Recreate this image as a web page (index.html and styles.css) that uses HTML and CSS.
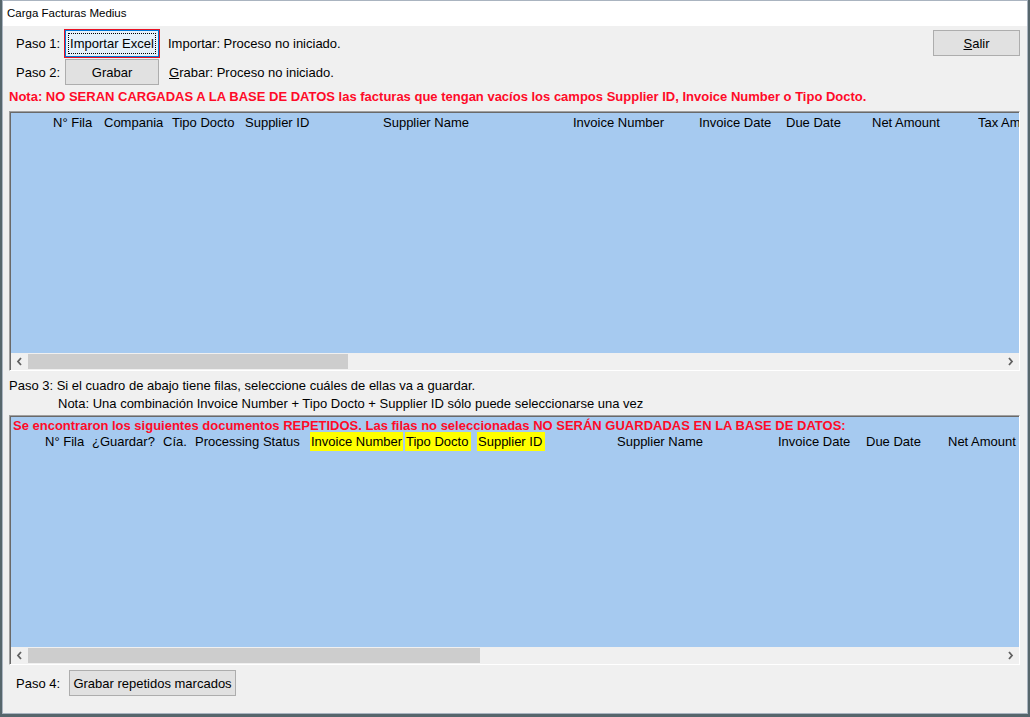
FILE: index.html
```html
<!DOCTYPE html>
<html lang="es">
<head>
<meta charset="utf-8">
<title>Carga Facturas Medius</title>
<link rel="stylesheet" href="styles.css">
</head>
<body>
<div class="window">
  <div class="titlebar">Carga Facturas Medius</div>
  <div class="client">
    <div class="row row1">
      <span class="label l1">Paso 1:</span>
      <span class="focus-wrap"><button class="btn btn-focus"><span class="focus-rect">Importar Excel</span></button></span>
      <span class="status">Importar: Proceso no iniciado.</span>
      <button class="btn btn-salir"><u>S</u>alir</button>
    </div>
    <div class="row row2">
      <span class="label l2">Paso 2:</span>
      <button class="btn btn-grabar">Grabar</button>
      <span class="status s2"><u>G</u>rabar: Proceso no iniciado.</span>
    </div>
    <div class="note">Nota: NO SERAN CARGADAS A LA BASE DE DATOS las facturas que tengan vacíos los campos Supplier ID, Invoice Number o Tipo Docto.</div>

    <div class="grid grid1">
      <div class="grid-body">
        <div class="hdr hdr1">
          <span class="c c-sp1"></span>
          <span class="c w51">N° Fila</span>
          <span class="c w68">Compania</span>
          <span class="c w73">Tipo Docto</span>
          <span class="c w138">Supplier ID</span>
          <span class="c w190">Supplier Name</span>
          <span class="c w126">Invoice Number</span>
          <span class="c w87">Invoice Date</span>
          <span class="c w86">Due Date</span>
          <span class="c w106">Net Amount</span>
          <span class="c wrest">Tax Amount</span>
        </div>
      </div>
      <div class="hscroll">
        <span class="arrow"><svg width="7" height="9" viewBox="0 0 7 9"><polyline points="5,1 2,4.5 5,8" fill="none" stroke="#606060" stroke-width="1.8"/></svg></span>
        <div class="track"><div class="thumb thumb1"></div></div>
        <span class="arrow"><svg width="7" height="9" viewBox="0 0 7 9"><polyline points="2,1 5,4.5 2,8" fill="none" stroke="#606060" stroke-width="1.8"/></svg></span>
      </div>
    </div>

    <div class="paso3 p3a">Paso 3: Si el cuadro de abajo tiene filas, seleccione cuáles de ellas va a guardar.</div>
    <div class="paso3 nota3">Nota: Una combinación Invoice Number + Tipo Docto + Supplier ID sólo puede seleccionarse una vez</div>

    <div class="grid grid2">
      <div class="grid-body">
        <div class="caption">Se encontraron los siguientes documentos REPETIDOS. Las filas no seleccionadas NO SERÁN GUARDADAS EN LA BASE DE DATOS:</div>
        <div class="hdr hdr2">
          <span class="c c-sp2"></span>
          <span class="c v47">N° Fila</span>
          <span class="c v71">¿Guardar?</span>
          <span class="c v32">Cía.</span>
          <span class="c v115">Processing Status</span>
          <span class="c v95"><span class="hl">Invoice Number</span></span>
          <span class="c v72"><span class="hl hl-wide">Tipo Docto</span></span>
          <span class="c v140"><span class="hl hl-wide">Supplier ID</span></span>
          <span class="c v161">Supplier Name</span>
          <span class="c v88">Invoice Date</span>
          <span class="c v82">Due Date</span>
          <span class="c wrest">Net Amount</span>
        </div>
      </div>
      <div class="hscroll">
        <span class="arrow"><svg width="7" height="9" viewBox="0 0 7 9"><polyline points="5,1 2,4.5 5,8" fill="none" stroke="#606060" stroke-width="1.8"/></svg></span>
        <div class="track"><div class="thumb thumb2"></div></div>
        <span class="arrow"><svg width="7" height="9" viewBox="0 0 7 9"><polyline points="2,1 5,4.5 2,8" fill="none" stroke="#606060" stroke-width="1.8"/></svg></span>
      </div>
    </div>

    <div class="row row4">
      <span class="label l4">Paso 4:</span>
      <button class="btn btn-rep">Grabar repetidos marcados</button>
    </div>
  </div>
</div>
</body>
</html>
```

FILE: styles.css
```css
html, body {
  margin: 0;
  padding: 0;
}
body {
  width: 1030px;
  height: 717px;
  overflow: hidden;
  background: #56666c;
  font-family: "Liberation Sans", Arial, sans-serif;
  font-size: 13px;
  color: #000;
}
.window {
  box-sizing: border-box;
  margin-left: 2px;
  width: 1026px;
  height: 714px;
  border: 1px solid #aab4c0;
  background: #f0f0f0;
  display: flex;
  flex-direction: column;
}
.titlebar {
  height: 25px;
  background: #fff;
  padding-left: 4px;
  line-height: 25px;
  font-size: 11.5px;
  flex: none;
}
.client {
  flex: 1;
  padding: 0 5px 0 6px;
  display: flex;
  flex-direction: column;
}
.row {
  display: flex;
  align-items: center;
}
.row1 {
  margin-top: 3px;
  height: 29px;
}
.row2 {
  margin-top: 1px;
  height: 26px;
}
.label {
  flex: none;
  margin-left: 7px;
  line-height: 15px;
}
.l1 { width: 48px; }
.l2 { width: 49px; }
.l4 { width: 53px; }
.btn {
  font-family: "Liberation Sans", Arial, sans-serif;
  font-size: 13px;
  color: #000;
  background: #e1e1e1;
  border: 1px solid #adadad;
  margin: 0;
  padding: 0;
  box-sizing: border-box;
  flex: none;
}
.focus-wrap {
  display: flex;
  border: 1px solid #e81123;
  flex: none;
}
.btn-focus {
  width: 94px;
  height: 27px;
  border: 1px solid #0078d7;
  background: #e5f1fb;
  display: flex;
  align-items: center;
  justify-content: center;
}
.focus-rect {
  display: block;
  width: 88px;
  height: 21px;
  line-height: 19px;
  box-sizing: border-box;
  border: 1px dotted #000;
  text-align: center;
  white-space: nowrap;
}
.btn-grabar {
  width: 94px;
  height: 26px;
}
.status {
  margin-left: 8px;
  line-height: 15px;
}
.s2 {
  margin-left: 10px;
}
.btn-salir {
  margin-left: auto;
  margin-right: 2px;
  align-self: flex-start;
  margin-top: 1px;
  width: 87px;
  height: 26px;
}
.note {
  margin-top: 5px;
  height: 14px;
  line-height: 14px;
  font-weight: bold;
  color: #ff0a28;
  white-space: nowrap;
}
.grid {
  margin-top: 7px;
  box-sizing: border-box;
  width: 1011px;
  border-top: 1px solid #a0a0a0;
  border-left: 1px solid #a0a0a0;
  border-right: 1px solid #ffffff;
  border-bottom: 1px solid #ffffff;
  display: flex;
  flex-direction: column;
  flex: none;
}
.grid1 { height: 260px; }
.grid2 { height: 250px; margin-top: 2px; }
.grid-body {
  flex: 1;
  background: #a6caf0;
  border-top: 1px solid #696969;
  border-left: 1px solid #696969;
  overflow: hidden;
  min-height: 0;
}
.hdr {
  display: flex;
  white-space: nowrap;
  height: 18px;
  line-height: 18px;
}
.hdr1 { margin-top: 1px; }
.c {
  flex: none;
  display: block;
}
.c-sp1 { width: 42px; }
.w51 { width: 51px; }
.w68 { width: 68px; }
.w73 { width: 73px; }
.w138 { width: 138px; }
.w190 { width: 190px; }
.w126 { width: 126px; }
.w87 { width: 87px; }
.w86 { width: 86px; }
.w106 { width: 106px; }
.wrest { flex: 1; overflow: hidden; }
.caption {
  margin-top: 1px;
  padding-left: 2px;
  height: 15px;
  line-height: 15px;
  font-weight: bold;
  color: #ff0a28;
  white-space: nowrap;
}
.c-sp2 { width: 34px; }
.v47 { width: 47px; }
.v71 { width: 71px; }
.v32 { width: 32px; }
.v115 { width: 115px; }
.v95 { width: 95px; }
.v72 { width: 72px; }
.v140 { width: 140px; }
.v161 { width: 161px; }
.v88 { width: 88px; }
.v82 { width: 82px; }
.hl {
  background: #ffff00;
  padding: 2px 1px;
}
.hl-wide {
  padding-right: 3px;
}
.hscroll {
  flex: none;
  height: 17px;
  background: #f0f0f0;
  border-left: 1px solid #696969;
  display: flex;
  align-items: center;
}
.arrow {
  flex: none;
  width: 17px;
  height: 17px;
  display: flex;
  align-items: center;
  justify-content: center;
}
.track {
  flex: 1;
  height: 15px;
  display: flex;
}
.thumb {
  height: 15px;
  background: #cdcdcd;
}
.thumb1 { width: 320px; }
.thumb2 { width: 452px; }
.paso3 {
  height: 18px;
  line-height: 18px;
  white-space: nowrap;
}
.p3a { margin-top: 6px; }
.nota3 { padding-left: 49px; }
.row4 {
  margin-top: 5px;
  height: 26px;
}
.btn-rep {
  width: 167px;
  height: 26px;
}
```
